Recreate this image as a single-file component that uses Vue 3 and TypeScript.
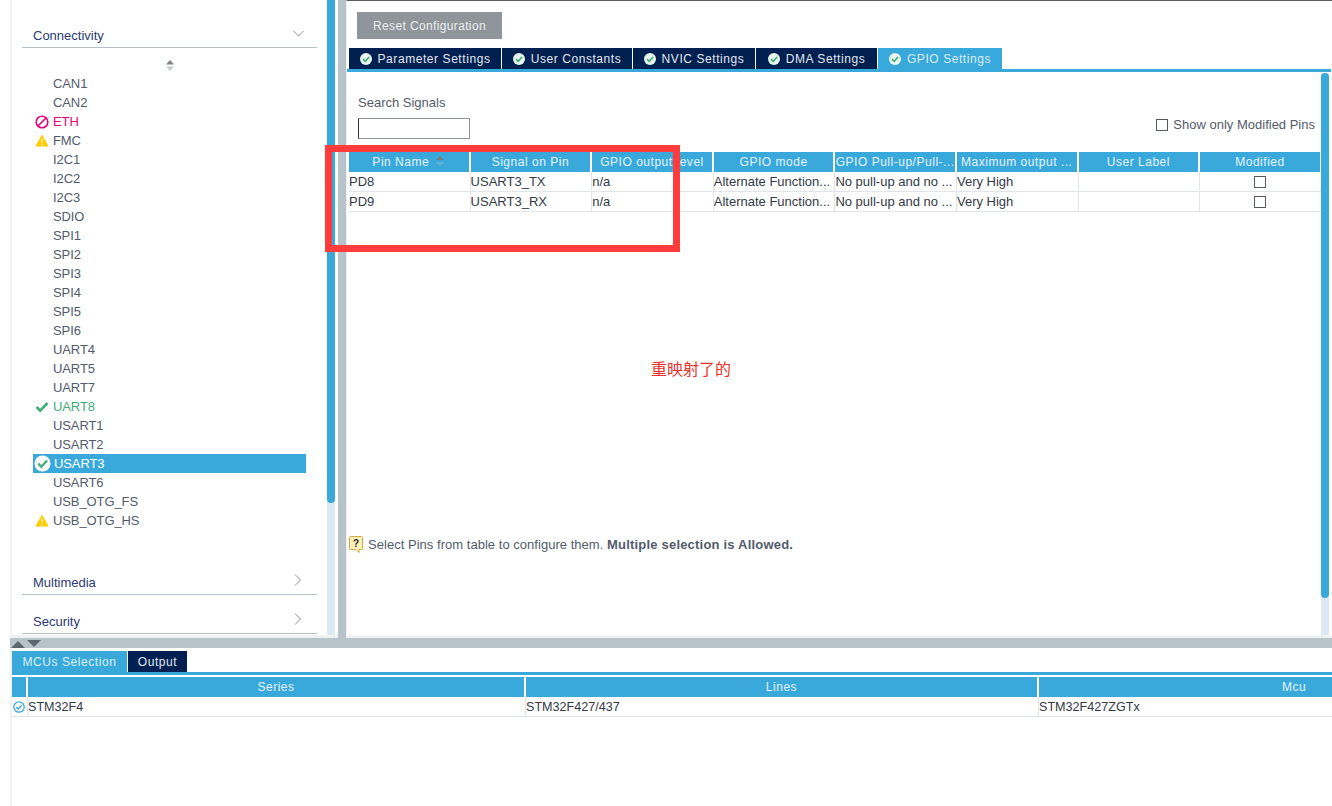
<template>
  <div class="app">
    <div class="top">
      <aside class="sidebar">
        <div class="side-content">
          <div class="section first">
            <span>Connectivity</span>
            <svg class="chev-down" width="11" height="7" viewBox="0 0 11 7"><path d="M.5 1 5.500 6 10.500 1" /></svg>
          </div>
          <div class="sort">
            <svg width="10" height="11" viewBox="0 0 10 11">
              <path d="M5 0 9 4.500H1z" fill="#7d8287" />
              <path d="M1 6.500h8L5 11z" fill="#c8cbce" />
            </svg>
          </div>
          <ul class="ip-list">
            <li
              v-for="ip in ipList"
              :key="ip.name"
              class="ip"
              :class="ip.status"
            >
              <span class="ip-icon">
                <svg v-if="ip.status === 'blocked'" width="14" height="14" viewBox="0 0 14 14">
                  <circle cx="7" cy="7" r="5.8" fill="none" stroke="#e6007e" stroke-width="1.6" />
                  <path d="M3 11 11 3" stroke="#e6007e" stroke-width="1.6" />
                </svg>
                <svg v-else-if="ip.status === 'warn'" width="14" height="13" viewBox="0 0 14 13">
                  <path d="M7 .5 13.8 12.5H.2z" fill="#ffcc00" />
                  <path d="M6.4 4.5h1.2l-.2 4.500h-.8zM6.4 10h1.200v1.200H6.400z" fill="#fff" />
                </svg>
                <svg v-else-if="ip.status === 'ok'" width="14" height="12" viewBox="0 0 14 12">
                  <path d="M1.5 6 5.200 9.600 12.500 2" fill="none" stroke="#3fae78" stroke-width="2.6" />
                </svg>
                <svg v-else-if="ip.status === 'selected'" width="17" height="17" viewBox="0 0 17 17">
                  <circle cx="8.5" cy="8.5" r="8" fill="#fff" />
                  <path d="M4.200 8.600 7.400 11.800 13 5.600" fill="none" stroke="#3fae78" stroke-width="2.2" />
                </svg>
              </span>
              {{ ip.name }}
            </li>
          </ul>
          <div v-for="name in closedSections" :key="name" class="section">
            <span>{{ name }}</span>
            <svg class="chev-right" width="8" height="12" viewBox="0 0 8 12"><path d="M1 .5 6.500 6 1 11.500" /></svg>
          </div>
        </div>
        <div class="scrollbar side-scroll"><div class="thumb"></div></div>
      </aside>

      <div class="gutter"></div>

      <main class="main">
        <button class="reset" type="button">Reset Configuration</button>
        <div class="tabs">
          <div
            v-for="tab in settingsTabs"
            :key="tab.label"
            class="tab"
            :class="{ active: tab.active }"
            :style="{ width: tab.width + 'px' }"
          >
            <svg width="12" height="12" viewBox="0 0 12 12">
              <circle cx="6" cy="6" r="6" fill="#e9f5ee" />
              <path d="M3 6.100 5.200 8.300 9.100 4" fill="none" stroke="#3fae78" stroke-width="1.7" />
            </svg>
            {{ tab.label }}
          </div>
        </div>
        <div class="panel">
          <div class="panel-content">
            <div class="search-row">
              <div class="search">
                <label for="signal-search">Search Signals</label>
                <input id="signal-search" type="text" />
              </div>
              <div class="only-modified">
                <span class="check"></span>
                Show only Modified Pins
              </div>
            </div>

            <div class="grid pin-grid head">
              <div v-for="col in pinColumns" :key="col" class="th">
                {{ col }}
                <svg v-if="col === 'Pin Name'" class="sort-mark" width="10" height="10" viewBox="0 0 10 10">
                  <path d="M5 0 9 4H1z" fill="#6f7d86" />
                  <path d="M1 6h8L5 10z" fill="#5fb3dc" />
                </svg>
              </div>
            </div>
            <div v-for="pin in pins" :key="pin.name" class="grid pin-grid row">
              <div class="td">{{ pin.name }}</div>
              <div class="td">{{ pin.signal }}</div>
              <div class="td">n/a</div>
              <div class="td">Alternate Function...</div>
              <div class="td">No pull-up and no ...</div>
              <div class="td">Very High</div>
              <div class="td"></div>
              <div class="td center"><span class="check"></span></div>
            </div>

            <div class="hint">
              <svg width="14" height="17" viewBox="0 0 14 17">
                <path d="M1.500.5h11a1 1 0 0 1 1 1v11a1 1 0 0 1-1 1H10v3l-3-3H1.500a1 1 0 0 1-1-1v-11a1 1 0 0 1 1-1z" fill="#fdf3b8" stroke="#d9a441" />
                <text x="7" y="11" text-anchor="middle" class="hint-q">?</text>
              </svg>
              <span>Select Pins from table to configure them. <b>Multiple selection is Allowed.</b></span>
            </div>
          </div>
          <div class="scrollbar main-scroll"><div class="thumb"></div></div>
        </div>
      </main>
    </div>

    <div class="splitter">
      <span class="tri up"></span>
      <span class="tri down"></span>
    </div>

    <section class="bottom">
      <div class="tabs bottom-tabs">
        <div class="tab active mcu-tab">MCUs Selection</div>
        <div class="tab output-tab">Output</div>
      </div>
      <div class="grid mcu-grid head">
        <div class="th"></div>
        <div class="th">Series</div>
        <div class="th">Lines</div>
        <div class="th">Mcu</div>
      </div>
      <div class="grid mcu-grid row">
        <div class="td center">
          <svg width="12" height="12" viewBox="0 0 12 12">
            <circle cx="6" cy="6" r="5.200" fill="none" stroke="#39a9dc" stroke-width="1.3" />
            <path d="M3.300 6 5.300 8 8.800 4.200" fill="none" stroke="#39a9dc" stroke-width="1.3" />
          </svg>
        </div>
        <div class="td">STM32F4</div>
        <div class="td">STM32F427/437</div>
        <div class="td">STM32F427ZGTx</div>
      </div>
    </section>

    <!-- annotations drawn on top of the screenshot -->
    <div class="red-box"></div>
    <div class="red-note">重映射了的</div>
  </div>
</template>

<script setup lang="ts">
type IpStatus = 'none' | 'blocked' | 'warn' | 'ok' | 'selected';

interface IpItem {
  name: string;
  status: IpStatus;
}

const statusByName: Record<string, IpStatus> = {
  ETH: 'blocked',
  FMC: 'warn',
  UART8: 'ok',
  USART3: 'selected',
  USB_OTG_HS: 'warn',
};

const ipNames = [
  'CAN1', 'CAN2', 'ETH', 'FMC', 'I2C1', 'I2C2', 'I2C3', 'SDIO',
  'SPI1', 'SPI2', 'SPI3', 'SPI4', 'SPI5', 'SPI6',
  'UART4', 'UART5', 'UART7', 'UART8',
  'USART1', 'USART2', 'USART3', 'USART6', 'USB_OTG_FS', 'USB_OTG_HS',
];

const ipList: IpItem[] = ipNames.map((name) => ({
  name,
  status: statusByName[name] ?? 'none',
}));

const closedSections = ['Multimedia', 'Security'];

const settingsTabs = [
  { label: 'Parameter Settings', width: 152 },
  { label: 'User Constants', width: 130 },
  { label: 'NVIC Settings', width: 122 },
  { label: 'DMA Settings', width: 121 },
  { label: 'GPIO Settings', width: 124, active: true },
];

const pinColumns = [
  'Pin Name',
  'Signal on Pin',
  'GPIO output level',
  'GPIO mode',
  'GPIO Pull-up/Pull-...',
  'Maximum output ...',
  'User Label',
  'Modified',
];

const pins = [
  { name: 'PD8', signal: 'USART3_TX' },
  { name: 'PD9', signal: 'USART3_RX' },
];
</script>

<style>
body {
  background: #fff;
  overflow: hidden;
}
</style>

<style scoped>
.app {
  position: relative;
  width: 1332px;
  height: 806px;
  overflow: hidden;
  box-sizing: border-box;
  padding-left: 10px;
  font-family: "Liberation Sans", Arial, sans-serif;
  font-size: 13px;
  color: #333a46;
  background: #fff;
}

.top {
  display: flex;
  height: 638px;
}

.sidebar {
  display: flex;
  width: 328px;
  box-sizing: border-box;
  padding-right: 3px;
  border-left: 2px solid #f0f1f3;
  border-bottom: 3px solid #f0f1f3;
}

.side-content {
  width: 315px;
  box-sizing: border-box;
  padding: 24px 10px 0;
}

.section {
  display: flex;
  align-items: center;
  justify-content: space-between;
  box-sizing: border-box;
  height: 24px;
  margin-top: 15px;
  padding: 0 15px 0 11px;
  border-bottom: 1px solid #b5c0c9;
  font-size: 13px;
  color: #2a3a74;
}

.section.first {
  margin-top: 0;
}

.section svg {
  fill: none;
  stroke: #8a9096;
  stroke-width: 1;
  margin-top: -5px;
}

.chev-down {
  margin-right: -2px;
}

.sort {
  display: flex;
  justify-content: center;
  height: 26px;
  padding-top: 12px;
  box-sizing: border-box;
}

.ip-list {
  list-style: none;
  margin: 0 11px;
  padding: 0 0 26px;
}

.ip {
  display: flex;
  align-items: center;
  height: 19px;
  color: #525b6b;
  white-space: nowrap;
  letter-spacing: -0.1px;
}

.ip-icon {
  display: flex;
  align-items: center;
  justify-content: center;
  width: 20px;
  flex: none;
  padding-right: 3px;
  box-sizing: border-box;
}

.ip.blocked {
  color: #e6007e;
}

.ip.ok {
  color: #3fae78;
}

.ip.selected {
  background: #39a9dc;
  color: #fff;
}

.ip.selected .ip-icon {
  width: 21px;
  padding-right: 2px;
}

.scrollbar {
  width: 8px;
  flex: none;
  background: #dce9f5;
}

.thumb {
  background: #39a9dc;
  border-radius: 0 0 4px 4px;
}

.side-scroll .thumb {
  height: 503px;
}

.gutter {
  width: 8px;
  flex: none;
  background: #b8c3c9;
}

.main {
  flex: 1;
  display: flex;
  flex-direction: column;
  min-width: 0;
  box-sizing: border-box;
  border-top: 1px solid #5c6066;
  border-left: 1px solid #f0f1f3;
  border-bottom: 3px solid #f0f1f3;
  padding-right: 1px;
}

.reset {
  align-self: flex-start;
  width: 145px;
  height: 27px;
  margin: 11px 0 9px 10px;
  padding: 0;
  border: none;
  background: #8f959b;
  color: #eceef0;
  font: 12px "Liberation Sans", Arial, sans-serif;
  letter-spacing: 0.36px;
}

.tabs {
  display: flex;
  gap: 1px;
  box-sizing: border-box;
  height: 24px;
  padding-left: 2px;
  border-bottom: 3px solid #39a9dc;
}

.tab {
  display: flex;
  align-items: center;
  justify-content: center;
  gap: 6px;
  background: #002052;
  color: #e4e8ee;
  font-size: 12px;
  letter-spacing: 0.57px;
  white-space: nowrap;
}

.tab.active {
  background: #39a9dc;
  color: #d9eff9;
}

.panel {
  flex: 1;
  display: flex;
  min-height: 0;
}

.panel-content {
  display: flex;
  flex-direction: column;
  width: 974px;
  flex: none;
}

.main-scroll {
  margin-top: 1px;
}

.main-scroll .thumb {
  height: 525px;
  border-radius: 4px;
}

.search-row {
  display: flex;
  justify-content: space-between;
  align-items: flex-end;
  height: 80px;
  padding: 0 6px 13px 11px;
  box-sizing: border-box;
  font-size: 13px;
  color: #525b6b;
}

.search {
  display: flex;
  flex-direction: column;
  gap: 8px;
}

.search input {
  width: 112px;
  height: 21px;
  box-sizing: border-box;
  padding: 0;
  border: 1px solid #8f959b;
  border-left-color: #333;
  background: #fff;
}

.only-modified {
  display: flex;
  align-items: center;
  gap: 5px;
  margin-bottom: 7px;
}

.check {
  display: block;
  width: 10px;
  height: 10px;
  border: 1px solid #555a60;
  background: #fff;
}

.grid {
  display: grid;
  font-size: 13px;
}

.pin-grid {
  grid-template-columns: repeat(8, 121.6px);
  margin-left: 2px;
  width: 972px;
}

.head {
  height: 20px;
}

.th {
  display: flex;
  align-items: center;
  justify-content: center;
  gap: 6px;
  overflow: hidden;
  margin-right: 2px;
  background: #39a9dc;
  color: #e4f3fb;
  font-size: 12px;
  white-space: nowrap;
  letter-spacing: 0.52px;
}

.row {
  height: 20px;
  border-bottom: 1px solid #e1e4e8;
  box-sizing: border-box;
  color: #333a46;
}

.td {
  display: flex;
  align-items: center;
  overflow: hidden;
  border-right: 1px solid #e1e4e8;
  white-space: nowrap;
}

.td.center {
  justify-content: center;
  padding-right: 2px;
}

.pin-grid .td:last-child {
  border-right: none;
}

.sort-mark {
  margin-top: -2px;
}

.hint {
  display: flex;
  align-items: center;
  gap: 5px;
  margin-top: auto;
  margin-bottom: 82px;
  margin-left: 2px;
  font-size: 13px;
  letter-spacing: 0.03px;
  color: #525b6b;
}

.hint b {
  letter-spacing: 0.2px;
}

.hint-q {
  font: bold 10px "Liberation Sans", Arial, sans-serif;
  fill: #222;
}

.splitter {
  display: flex;
  align-items: flex-end;
  gap: 2px;
  height: 10px;
  padding: 0 0 0 1px;
  box-sizing: border-box;
  background: #b8c3c9;
}

.tri {
  width: 0;
  height: 0;
  border-left: 7px solid transparent;
  border-right: 7px solid transparent;
}

.tri.up {
  border-bottom: 7px solid #5c6670;
}

.tri.down {
  border-top: 7px solid #5c6670;
  margin-bottom: 1px;
}

.bottom {
  box-sizing: border-box;
  height: 158px;
  padding-top: 3px;
  border-left: 2px solid #f0f1f3;
}

.bottom-tabs {
  padding-left: 0;
  margin-bottom: 2px;
}

.mcu-tab {
  width: 115px;
}

.output-tab {
  width: 59px;
}

.mcu-grid {
  grid-template-columns: 16px 498px 513px 510px;
  font-size: 12.6px;
}

.mcu-grid .th:last-child {
  margin-right: 0;
}

.red-box {
  position: absolute;
  left: 325px;
  top: 145px;
  width: 355px;
  height: 107px;
  box-sizing: border-box;
  border: 7px solid #ff3b3b;
}

.red-note {
  position: absolute;
  left: 651px;
  top: 357px;
  font: 16px/22px "Noto Sans CJK SC", sans-serif;
  color: #e8312a;
}
</style>
